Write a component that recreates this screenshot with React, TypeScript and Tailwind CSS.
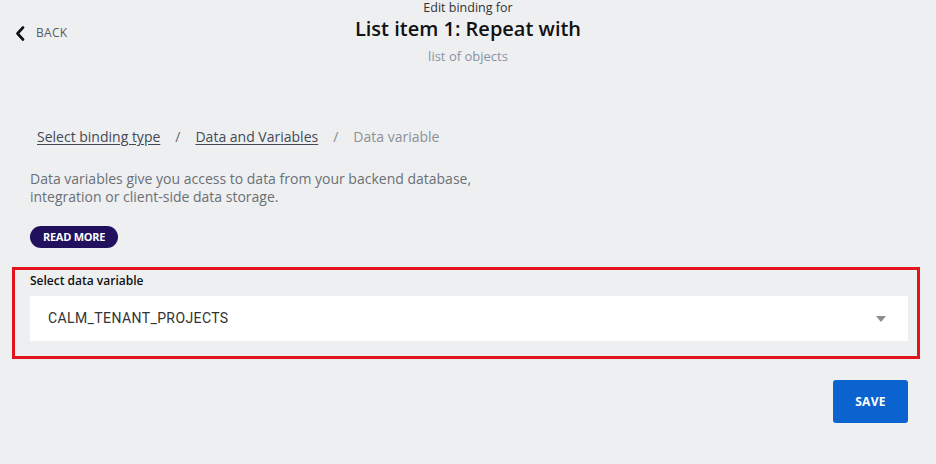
import React from 'react'

const font = { fontFamily: '"Open Sans", Lato, Arial, sans-serif' }

const ChevronLeft = () => (
  <svg width="10" height="15" viewBox="0 0 10 15" fill="none">
    <path d="M8 1.5 2.5 7.5 8 13.5" stroke="#111" strokeWidth="2.6" strokeLinecap="round" strokeLinejoin="round" />
  </svg>
)

const App: React.FC = () => {
  return (
    <div className="w-[936px] h-[464px] bg-[#eeeff1] overflow-hidden relative" style={font}>
      {/* Header */}
      <div className="flex items-start h-[80px]">
        <a className="flex items-center gap-[11px] pl-[15px] pt-[24px] text-[12px] tracking-wide text-[#555b66] w-[200px]">
          <ChevronLeft />
          BACK
        </a>
        <div className="flex-1 flex flex-col items-center pt-[1px]">
          <div className="text-[12.5px] leading-[14px] text-[#333]">Edit binding for</div>
          <h1 className="text-[20px] leading-[26px] font-semibold text-[#111] mt-[1px]">List item 1: Repeat with</h1>
          <div className="text-[13px] leading-[18px] text-[#8a93a5] mt-[5px]">list of objects</div>
        </div>
        <div className="w-[200px]" />
      </div>

      <div className="pl-[30px] pr-[28px]">
        {/* Breadcrumb */}
        <div className="mt-[47px] pl-[7px] flex items-center text-[14px] leading-[20px]">
          <a className="underline underline-offset-2 text-[#444a55]">Select binding type</a>
          <span className="mx-[15px] text-[#666]">/</span>
          <a className="underline underline-offset-2 text-[#444a55]">Data and Variables</a>
          <span className="mx-[15px] text-[#888]">/</span>
          <span className="text-[#8d9197]">Data variable</span>
        </div>

        <p className="mt-[23px] text-[14px] leading-[18px] text-[#6b6f76] w-[460px]">
          Data variables give you access to data from your backend database, integration or client-side data storage.
        </p>

        <button className="mt-[20px] h-[22px] px-[13px] rounded-full bg-[#20105e] text-white text-[11px] font-bold tracking-tight">
          READ MORE
        </button>

        {/* Select data variable (highlighted) */}
        <div className="mt-[19px] -ml-[18px] -mr-[12px] border-[3px] border-[#e3141d] pl-[15px] pr-[9px] pt-[3px] pb-[15px]">
          <div className="text-[12px] leading-[16px] font-semibold text-[#111]">Select data variable</div>
          <div className="mt-[7px] h-[45px] bg-white flex items-center justify-between pl-[18px] pr-[22px]">
            <span className="text-[14px] tracking-[0.4px] text-[#333]" style={{ fontFamily: 'Roboto, Arial, sans-serif' }}>CALM_TENANT_PROJECTS</span>
            <svg width="10" height="6" viewBox="0 0 10 6">
              <path d="M0 0h10L5 6z" fill="#8a8d92" />
            </svg>
          </div>
        </div>

        <div className="flex justify-end mt-[21px]">
          <button className="w-[75px] h-[43px] rounded-[3px] bg-[#0b63cf] text-white text-[12px] font-bold tracking-wide">
            SAVE
          </button>
        </div>
      </div>
    </div>
  )
}

export default App
